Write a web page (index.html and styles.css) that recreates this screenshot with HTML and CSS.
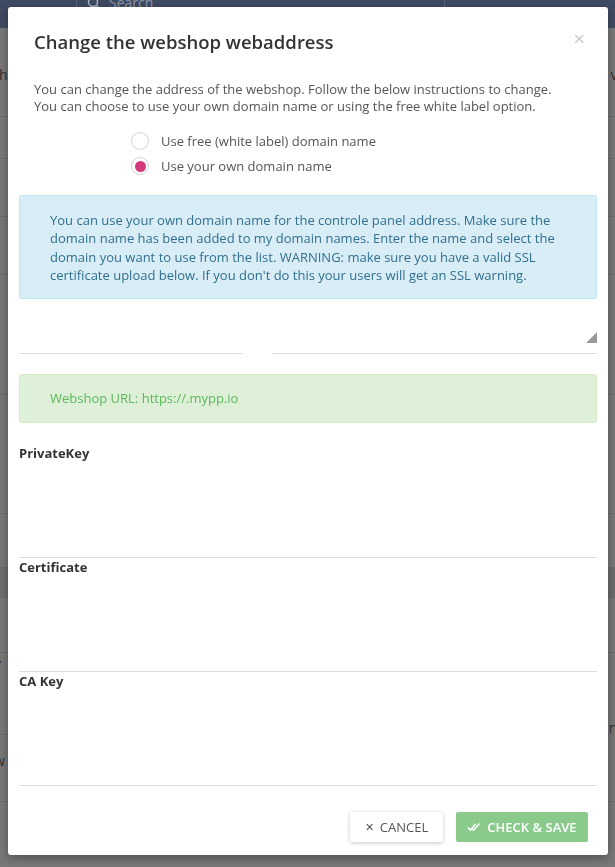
FILE: index.html
```
<!DOCTYPE html>
<html>
<head>
<meta charset="utf-8">
<link rel="stylesheet" href="styles.css">
</head>
<body>
<div class="page">
  <div class="topbar">
    <div class="search">
      <svg class="search-icon" width="14" height="14" viewBox="0 0 14 14"><circle cx="6" cy="6" r="4.5" fill="none" stroke="#aab3c4" stroke-width="1.5"/><line x1="9.3" y1="9.3" x2="13" y2="13" stroke="#aab3c4" stroke-width="1.5"/></svg>
      <span>Search</span>
    </div>
  </div>
  <div class="rows">
    <div class="row r1"><span class="lt">th</span><span class="rt">vi</span></div>
    <div class="row r2"></div>
    <div class="row r3"></div>
    <div class="row r4"></div>
    <div class="row r5"></div>
    <div class="row r6"></div>
    <div class="row r7"></div>
    <div class="row band"></div>
    <div class="row r8"></div>
    <div class="row r9"><span class="lt top">v</span><span class="rt bottom">n.</span></div>
    <div class="row r10"><span class="lt mid">w</span></div>
  </div>
</div>

<div class="modal">
  <div class="modal-header">
    <h2 class="title">Change the webshop webaddress</h2>
    <span class="close">&times;</span>
  </div>
  <div class="modal-body">
    <p class="intro">You can change the address of the webshop. Follow the below instructions to change.<br>You can choose to use your own domain name or using the free white label option.</p>
    <div class="radios">
      <label class="radio"><span class="dot"></span><span>Use free (white label) domain name</span></label>
      <label class="radio"><span class="dot checked"></span><span>Use your own domain name</span></label>
    </div>
    <div class="alert info">You can use your own domain name for the controle panel address. Make sure the domain name has been added to my domain names. Enter the name and select the domain you want to use from the list. WARNING: make sure you have a valid SSL certificate upload below. If you don't do this your users will get an SSL warning.</div>
    <div class="inputs">
      <div class="input left"></div>
      <div class="input right"><span class="tri"></span></div>
    </div>
    <div class="alert success">Webshop URL: https://.mypp.io</div>
    <div class="field first">
      <div class="label">PrivateKey</div>
      <div class="area"></div>
    </div>
    <div class="field">
      <div class="label">Certificate</div>
      <div class="area"></div>
    </div>
    <div class="field">
      <div class="label">CA Key</div>
      <div class="area"></div>
    </div>
  </div>
  <div class="modal-footer">
    <button class="btn cancel"><span class="x">&#x2715;</span>CANCEL</button>
    <button class="btn save"><svg width="14" height="10" viewBox="0 0 14 10"><polyline points="1,5.5 3.5,8 8.5,2" fill="none" stroke="#fff" stroke-width="1.6"/><polyline points="5.5,7 6.5,8 12.5,1.5" fill="none" stroke="#fff" stroke-width="1.6"/></svg>CHECK &amp; SAVE</button>
  </div>
</div>
</body>
</html>
```
FILE: styles.css
```
* { box-sizing: border-box; }
html, body { margin: 0; padding: 0; }
body {
  width: 615px;
  height: 867px;
  overflow: hidden;
  font-family: "Open Sans", "Noto Sans", sans-serif;
  background: #787878;
}
.page { width: 615px; height: 867px; }
.topbar {
  height: 28px;
  background: #3f4b63;
  padding-left: 76px;
}
.search {
  width: 369px;
  height: 28px;
  border-left: 1px solid #5a6680;
  border-right: 1px solid #5a6680;
  display: flex;
  align-items: flex-start;
  gap: 8px;
  padding-left: 10px;
  color: #8e98ab;
  font-size: 14px;
  line-height: 12px;
}
.search-icon { margin-top: -4px; }
.search span { margin-top: -3px; }
.rows { display: flex; flex-direction: column; }
.row {
  border-bottom: 1px solid #6c6c6c;
  display: flex;
  justify-content: space-between;
  align-items: center;
  color: #2e2e2e;
  font-size: 14px;
  line-height: 18px;
}
.r1 { height: 89px; padding-top: 38px; align-items: flex-start; }
.lt { margin-left: -6px; }
.rt { margin-right: -6px; }
.top { align-self: flex-start; margin-top: 2px; }
.bottom { align-self: flex-end; margin-bottom: -3px; }
.mid { margin-top: -14px; }
.r2 { height: 42px; }
.r3 { height: 58px; }
.r4 { height: 58px; }
.r5 { height: 120px; }
.r6 { height: 119px; }
.r7 { height: 54px; }
.band { height: 30px; background: #6e6e6e; }
.r8 { height: 55px; }
.r9 { height: 82px; }
.r10 { height: 67px; }

.modal {
  position: fixed;
  left: 8px;
  top: 7px;
  width: 600px;
  height: 848px;
  background: #fff;
  border-radius: 3px;
  box-shadow: 0 3px 10px rgba(0,0,0,0.35);
  display: flex;
  flex-direction: column;
}
.modal-header {
  display: flex;
  justify-content: space-between;
  align-items: flex-start;
  padding: 22px 23px 0 26px;
}
.title {
  margin: 0;
  font-size: 18.5px;
  font-weight: 600;
  color: #333;
  line-height: 26px;
}
.close {
  color: #c8c8c8;
  font-size: 20px;
  line-height: 20px;
  font-weight: 400;
}
.modal-body {
  padding: 0 11px;
  display: flex;
  flex-direction: column;
}
.intro {
  margin: 26px 0 0 15px;
  font-size: 13px;
  line-height: 17px;
  color: #555;
}
.radios {
  display: flex;
  flex-direction: column;
  gap: 7px;
  margin: 17px 0 0 112px;
}
.radio {
  display: flex;
  align-items: center;
  gap: 12px;
  font-size: 13px;
  color: #555;
  line-height: 17px;
}
.dot {
  width: 18px;
  height: 18px;
  border-radius: 50%;
  border: 1px solid #d4d4d4;
  display: flex;
  align-items: center;
  justify-content: center;
}
.dot.checked::after {
  content: "";
  width: 11px;
  height: 11px;
  border-radius: 50%;
  background: #d4397c;
}
.alert {
  border-radius: 3px;
  font-size: 13px;
  border: 1px solid transparent;
}
.info {
  margin-top: 20px;
  background: #d9edf7;
  border-color: #bce8f1;
  color: #31708f;
  line-height: 18.4px;
  padding: 15px 30px 13px 30px;
}
.inputs {
  display: flex;
  gap: 29px;
  margin-top: 21px;
}
.input {
  height: 34px;
  border-bottom: 1px solid #ddd;
  position: relative;
}
.input.left { width: 224px; }
.input.right { flex: 1; }
.tri {
  position: absolute;
  right: 0;
  top: 12px;
  width: 0;
  height: 0;
  border-left: 11px solid transparent;
  border-bottom: 11px solid #999;
}
.success {
  margin-top: 20px;
  background: #dff0d8;
  border-color: #d6e9c6;
  color: #5cb85c;
  line-height: 18px;
  padding: 14px 30px 15px;
}
.field.first { margin-top: 21px; }
.label {
  font-size: 13px;
  font-weight: 700;
  color: #333;
  line-height: 18px;
}
.area {
  height: 96px;
  border-bottom: 1px solid #ddd;
}
.modal-footer {
  display: flex;
  justify-content: flex-end;
  gap: 13px;
  padding: 26px 20px 0 0;
}
.btn {
  height: 30px;
  border: none;
  border-radius: 2px;
  font-family: "Open Sans", "Noto Sans", sans-serif;
  font-size: 13px;
  display: flex;
  align-items: center;
  justify-content: center;
  gap: 6px;
  padding: 0;
}
.cancel {
  width: 93px;
  background: #fff;
  color: #555;
  box-shadow: 0 1px 4px rgba(0,0,0,0.22);
}
.cancel .x { font-size: 11px; color: #555; }
.save {
  width: 132px;
  background: #8acb8c;
  color: #fff;
  font-weight: 600;
}
```
